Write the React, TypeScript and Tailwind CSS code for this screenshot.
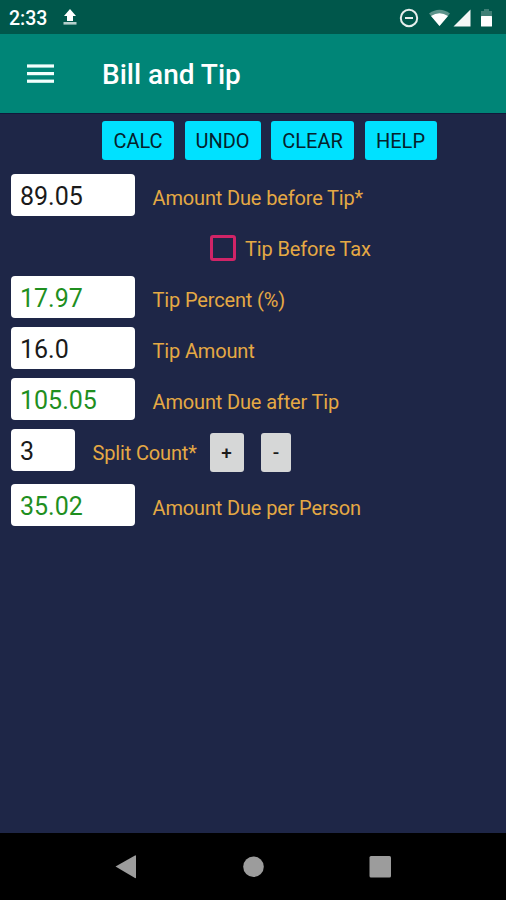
type ResultRowProps = {
  value: string;
  label: string;
  computed?: boolean;
};

function Field({ value, computed, narrow }: { value: string; computed?: boolean; narrow?: boolean }) {
  return (
    <div
      className={`flex h-[42px] shrink-0 items-center rounded bg-white pl-[9.5px] pt-[2px] text-[25px] leading-none ${
        narrow ? "w-16" : "w-[124px]"
      } ${computed ? "text-[#1f8f1f]" : "text-[#1a1a1a]"}`}
    >
      {value}
    </div>
  );
}

function Row({ value, label, computed }: ResultRowProps) {
  return (
    <div className="flex h-[42px] items-center">
      <Field value={value} computed={computed} />
      <span className="ml-[18px] pt-[5px] text-[20px] leading-none tracking-[-0.15px] text-[#e5a944]">{label}</span>
    </div>
  );
}

function StatusBar() {
  return (
    <div className="flex h-[34px] items-center bg-[#00574b] pl-[9px] text-white">
      <span className="w-[39px] pt-[4px] text-[19.5px] leading-none font-medium">2:33</span>
      <svg className="ml-[15px]" width="14" height="18" viewBox="0 0 14 18">
        <path d="M7 1 L13 8 H10 V13 H4 V8 H1 Z" fill="#ffffff" />
        <rect x="0.5" y="14" width="13" height="2.6" fill="#b5d0cc" />
      </svg>
      <svg className="ml-auto mr-[11px]" width="96" height="22" viewBox="0 0 96 22">
        <circle cx="10" cy="12" r="8.2" fill="none" stroke="#e6efed" strokeWidth="2" />
        <rect x="6" y="11" width="8" height="2" fill="#e6efed" />
        <path d="M30 7.5 Q40.5 0 51 7.5 L40.5 20 Z" fill="#5d938b" />
        <path d="M32 10 Q40.5 4.5 49 10 L40.5 20 Z" fill="#ffffff" />
        <path d="M71.5 3.5 V20.5 H54.5 Z" fill="#f4f8f7" />
        <path d="M82 5 H85 V3 H90 V5 H93 V11 H82 Z" fill="#3f7f76" />
        <rect x="82" y="10" width="11" height="10.5" rx="0.5" fill="#ffffff" />
      </svg>
    </div>
  );
}

function AppBar() {
  return (
    <header className="flex h-[79px] items-center bg-[#008577] pl-[26.5px] text-white">
      <svg width="27" height="20" viewBox="0 0 27 20" fill="#f2fffd">
        <rect y="0.4" width="27" height="3.2" />
        <rect y="8" width="27" height="3.2" />
        <rect y="15.6" width="27" height="3.2" />
      </svg>
      <h1 className="ml-[48.5px] pt-[3px] text-[28px] leading-none font-medium">Bill and Tip</h1>
    </header>
  );
}

const actionClass =
  "h-[39px] rounded-[3px] bg-[#00e1ff] pt-px text-center text-[20px] leading-none text-[#06222c]";
const stepClass =
  "mt-[4px] h-[39px] rounded-[3px] bg-[#d6d7d7] pt-px text-center text-[19px] leading-none font-medium text-[#1c1c1c]";

export default function App() {
  return (
    <div className="flex h-[900px] w-[506px] flex-col overflow-hidden bg-[#1e2647] font-['Roboto',sans-serif]">
      <StatusBar />
      <AppBar />

      <main className="flex-1 border-t border-[#101a3c] pl-[10.5px]">
        <div className="mt-[7px] ml-[91.5px] flex">
          <button className={`${actionClass} w-[72px]`}>CALC</button>
          <button className={`${actionClass} ml-[10.5px] w-[76px]`}>UNDO</button>
          <button className={`${actionClass} ml-[10.5px] w-[83px]`}>CLEAR</button>
          <button className={`${actionClass} ml-[10.5px] w-[72px]`}>HELP</button>
        </div>

        <div className="mt-[14px]">
          <Row value="89.05" label="Amount Due before Tip*" />
        </div>

        <div className="flex h-[60px] items-center pt-[4px] pl-[199px]">
          <div className="size-[26px] rounded-[3px] border-[3px] border-[#d02467]" />
          <span className="ml-[9.5px] pt-px text-[20px] leading-none tracking-[-0.15px] text-[#e5a944]">
            Tip Before Tax
          </span>
        </div>

        <div className="flex flex-col gap-[9px]">
          <Row value="17.97" label="Tip Percent (%)" computed />
          <Row value="16.0" label="Tip Amount" />
          <Row value="105.05" label="Amount Due after Tip" computed />
          <div className="flex h-[42px] items-center">
            <Field value="3" narrow />
            <span className="ml-[18px] w-[117px] pt-[5px] text-[20px] leading-none tracking-[-0.15px] text-[#e5a944]">
              Split Count*
            </span>
            <button className={`${stepClass} w-[34px]`}>+</button>
            <button className={`${stepClass} ml-[17.5px] w-[30px]`}>-</button>
          </div>
        </div>

        <div className="mt-[13px]">
          <Row value="35.02" label="Amount Due per Person" computed />
        </div>
      </main>

      <nav className="h-[67px] bg-black">
        <svg width="506" height="67" viewBox="0 0 506 67" fill="#9c9c9c">
          <path d="M115.5 33.5 L135 22.5 Q136 22 136 23 V44.5 Q136 45.5 135 45 Z" />
          <circle cx="253.5" cy="33.7" r="10.3" />
          <rect x="369.5" y="23" width="21.5" height="21.5" rx="1.5" />
        </svg>
      </nav>
    </div>
  );
}
